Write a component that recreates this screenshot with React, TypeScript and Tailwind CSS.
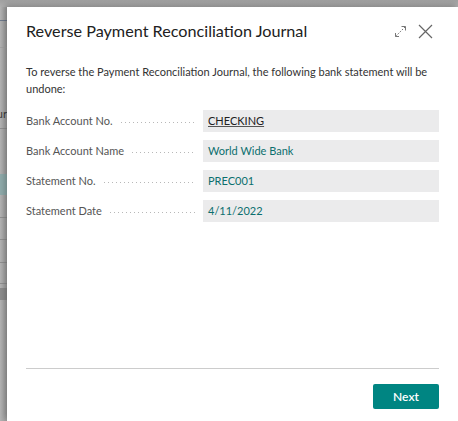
const fields = [
  { label: "Bank Account No.", value: "CHECKING", link: false },
  { label: "Bank Account Name", value: "World Wide Bank", link: true },
  { label: "Statement No.", value: "PREC001", link: true },
  { label: "Statement Date", value: "4/11/2022", link: true },
];

function ExpandIcon() {
  return (
    <svg width="13" height="13" viewBox="0 0 13 13" fill="none" stroke="#777" strokeWidth="1">
      <path d="M1.5 11.5 L11.5 1.5" strokeDasharray="1.6 1.4" />
      <path d="M7.5 1.5 H11.5 V5.5" />
      <path d="M1.5 8 V11.5 H5" />
    </svg>
  );
}

function CloseIcon() {
  return (
    <svg width="15" height="15" viewBox="0 0 15 15" fill="none" stroke="#666" strokeWidth="1.2">
      <path d="M1 1 L14 14 M14 1 L1 14" />
    </svg>
  );
}

// dimmed page peeking out behind the dialog
function PageEdge() {
  return (
    <div className="flex w-[7px] shrink-0 flex-col overflow-hidden bg-gradient-to-r from-[#b3b3b3] to-[#9d9d9d]">
      <div className="h-[13px] shrink-0" />
      <div className="h-px shrink-0 bg-[#6f7a8c]" />
      <div className="h-[26px] shrink-0" />
      <div className="h-px shrink-0 bg-[#a3a3a3]" />
      <div className="h-[58px] shrink-0" />
      <div className="flex h-[14px] shrink-0 items-center justify-end whitespace-nowrap text-[11px] leading-none text-[#3a3a3a]">
        Jour
      </div>
      <div className="h-[8px] shrink-0" />
      <div className="h-px shrink-0 bg-[#8f8f8f]" />
      <div className="h-[45px] shrink-0" />
      <div className="h-[21px] shrink-0 bg-[#8faaaa]" />
      <div className="h-[22px] shrink-0" />
      <div className="h-px shrink-0 bg-[#8f8f8f]" />
      <div className="h-[21px] shrink-0" />
      <div className="h-px shrink-0 bg-[#8f8f8f]" />
      <div className="h-[22px] shrink-0" />
      <div className="h-px shrink-0 bg-[#8f8f8f]" />
      <div className="h-[20px] shrink-0" />
      <div className="h-px shrink-0 bg-[#8f8f8f]" />
      <div className="h-[4px] shrink-0" />
      <div className="h-[12px] shrink-0 bg-[#8c8c8c]" />
    </div>
  );
}

export default function App() {
  return (
    <div
      className="flex h-[421px] w-[458px] flex-col overflow-hidden bg-[#a8a8a8]"
      style={{ fontFamily: 'Lato, "Open Sans", sans-serif' }}
    >
      <div className="h-[7px] shrink-0 bg-gradient-to-b from-[#a0a0a0] to-[#b0b0b0]" />
      <div className="flex flex-1">
        <PageEdge />
        <div className="flex flex-1 flex-col bg-white pl-[19px] pr-[19px] shadow-[-2px_-2px_6px_rgba(0,0,0,0.25)]">
          <div className="flex h-[48px] items-center justify-between">
            <h1 className="text-[16.2px] leading-none text-[#212121]">Reverse Payment Reconciliation Journal</h1>
            <div className="mr-[6px] flex items-center gap-[11px]">
              <ExpandIcon />
              <CloseIcon />
            </div>
          </div>

          <p className="mt-[8px] text-[11px] leading-[17px] text-[#333]">
            To reverse the Payment Reconciliation Journal, the following bank statement will be undone:
          </p>

          <div className="mt-[13px] flex flex-col gap-[8px]">
            {fields.map((f) => (
              <div key={f.label} className="flex h-[22px] items-center">
                <div className="flex w-[177px] items-center pr-[8px]">
                  <span className="whitespace-nowrap text-[11px] text-[#555]">{f.label}</span>
                  <span className="ml-[8px] mt-[3px] h-px flex-1 bg-[linear-gradient(to_right,#b8b8b8_1px,transparent_1px)] bg-[length:4px_1px] bg-repeat-x" />
                </div>
                <div
                  className={
                    "flex h-[22px] flex-1 items-center bg-[#ebebec] px-[5px] text-[11px] " +
                    (f.link ? "text-[#0b6f6e]" : "text-[#212121] underline decoration-[#555]")
                  }
                >
                  {f.value}
                </div>
              </div>
            ))}
          </div>

          <div className="flex-1" />
          <div className="h-px bg-[#cccccc]" />
          <div className="flex justify-end pt-[15px] pb-[12px]">
            <button className="h-[25px] w-[66px] rounded-[2px] bg-[#008582] text-[12px] font-semibold text-white">
              Next
            </button>
          </div>
        </div>
      </div>
    </div>
  );
}
